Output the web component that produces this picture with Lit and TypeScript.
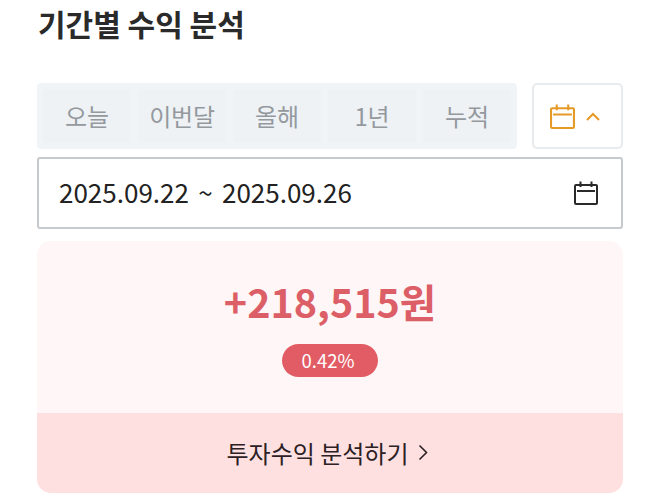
import { LitElement, html, css } from "lit";
import { customElement } from "lit/decorators.js";

const calendar = (cls: string) => html`<svg class=${cls} viewBox="0 0 24 24" fill="none" stroke="currentColor" stroke-width="2">
  <rect x="1" y="4" width="22" height="19" rx="1"></rect>
  <path d="M3 10H21M6.5 0.5V6M17.5 0.5V6"></path>
</svg>`;

@customElement("app-root")
export class AppRoot extends LitElement {
  static styles = css`
    :host {
      display: block;
      width: 660px;
      height: 503px;
      overflow: hidden;
      background: #fff;
      box-sizing: border-box;
      padding: 0 37px;
      font-family: "Noto Sans CJK KR", "Noto Sans", sans-serif;
    }
    h1 {
      margin: 0;
      height: 83px;
      padding: 3px 0 0 1px;
      box-sizing: border-box;
      font-size: 30px;
      line-height: 40px;
      font-weight: 700;
      color: #2a2a2a;
    }
    .controls {
      display: flex;
      gap: 15px;
      height: 66px;
    }
    .tabs {
      width: 480px;
      display: grid;
      grid-template-columns: repeat(5, 1fr);
      gap: 7px;
      padding: 6px;
      box-sizing: border-box;
      background: #f1f4f7;
      border-radius: 4px;
    }
    .tab {
      display: flex;
      align-items: center;
      justify-content: center;
      background: #eef2f5;
      border-radius: 3px;
      font-size: 24px;
      color: #94999e;
      padding-bottom: 2px;
      letter-spacing: -0.2px;
    }
    .toggle {
      width: 91px;
      display: flex;
      align-items: center;
      justify-content: center;
      gap: 11px;
      box-sizing: border-box;
      border: 2px solid #e8ebee;
      border-radius: 5px;
      color: #e59a26;
      padding-right: 5px;
    }
    .ic-orange { width: 25px; height: 25px; }
    .chev { width: 14px; height: 9px; }
    .date {
      margin-top: 8px;
      height: 72px;
      display: flex;
      align-items: center;
      justify-content: space-between;
      box-sizing: border-box;
      padding: 0 23px 0 20px;
      border: 2px solid #c6cacd;
      border-radius: 3px;
      font-size: 26px;
      color: #222;
    }
    .date span { margin-top: -4px; word-spacing: 3.5px; }
    .ic-dark { width: 24px; height: 24px; color: #2a2a2a; }
    .card {
      margin-top: 12px;
      height: 252px;
      border-radius: 14px;
      overflow: hidden;
      display: flex;
      flex-direction: column;
    }
    .summary {
      height: 172px;
      background: #fff7f7;
      display: flex;
      flex-direction: column;
      align-items: center;
    }
    .amount {
      margin-top: 32px;
      height: 56px;
      font-size: 39.5px;
      line-height: 56px;
      font-weight: 700;
      color: #dc5f68;
    }
    .pill {
      margin-top: 15px;
      width: 96px;
      height: 33px;
      border-radius: 17px;
      background: #e25c66;
      color: #fff;
      font-size: 18.5px;
      display: flex;
      align-items: center;
      justify-content: center;
      padding: 0 4px 2px 0;
      box-sizing: border-box;
    }
    .action {
      flex: 1;
      background: #ffe0e1;
      display: flex;
      align-items: center;
      justify-content: center;
      gap: 9px;
      font-size: 24px;
      color: #2c2024;
      padding: 0 6px 2px 0;
    }
    .next { width: 10px; height: 17px; }
  `;

  render() {
    const tabs = ["오늘", "이번달", "올해", "1년", "누적"];
    return html`
      <h1>기간별 수익 분석</h1>
      <div class="controls">
        <div class="tabs">${tabs.map((t) => html`<div class="tab">${t}</div>`)}</div>
        <div class="toggle">
          ${calendar("ic-orange")}
          <svg class="chev" viewBox="0 0 14 9" fill="none" stroke="currentColor" stroke-width="2"><path d="M1 8L7 2L13 8"></path></svg>
        </div>
      </div>
      <div class="date"><span>2025.09.22 ~ 2025.09.26</span>${calendar("ic-dark")}</div>
      <div class="card">
        <div class="summary">
          <div class="amount">+218,515원</div>
          <div class="pill">0.42%</div>
        </div>
        <div class="action">
          <span>투자수익 분석하기</span>
          <svg class="next" viewBox="0 0 10 17" fill="none" stroke="currentColor" stroke-width="1.6"><path d="M1.5 1.5L8.5 8.5L1.5 15.5"></path></svg>
        </div>
      </div>
    `;
  }
}
